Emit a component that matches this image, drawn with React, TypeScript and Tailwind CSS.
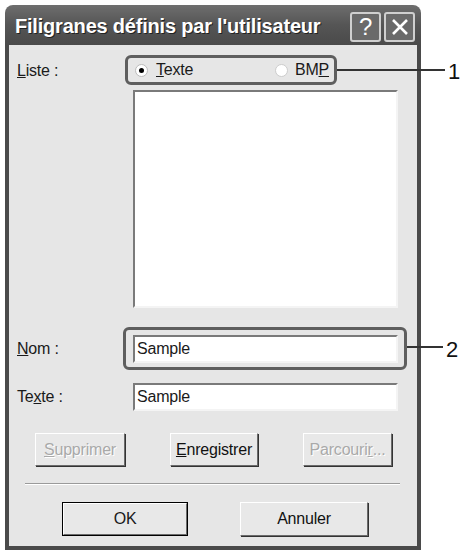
import React from 'react';

const raised =
  'border border-t-white border-l-white border-r-[#6b6b6b] border-b-[#6b6b6b] shadow-[1px_1px_0_#333]';
const sunken =
  'border-2 border-t-[#7a7a7a] border-l-[#7a7a7a] border-r-[#f4f4f4] border-b-[#f4f4f4] bg-white';

const Btn: React.FC<{ w: string; disabled?: boolean; children: React.ReactNode }> = ({ w, disabled, children }) => (
  <div
    className={`${w} h-[33px] flex items-center justify-center bg-[#e8e8e8] ${raised} ${
      disabled ? 'text-[#a9a9a9] [text-shadow:1px_1px_0_#fff]' : 'text-[#111]'
    }`}
  >
    {children}
  </div>
);

const App: React.FC = () => {
  return (
    <div className="w-[465px] h-[554px] bg-white relative font-['Liberation_Sans',Arial,sans-serif] text-[16px] tracking-[-0.2px]">
      <div className="absolute left-[5px] top-[5px] w-[416px] h-[545px] flex flex-col">
        {/* Title bar */}
        <div className="h-[40px] rounded-t-[8px] bg-gradient-to-b from-[#6e6e6e] via-[#555] to-[#4a4a4a] flex items-center pl-[10px] pr-[6px]">
          <span className="text-white font-bold text-[20px] tracking-[-0.2px] [text-shadow:1px_1px_0_#222] flex-1 pt-[2px]">
            Filigranes définis par l'utilisateur
          </span>
          <div className="flex gap-[3px] mt-[3px]">
            <div className="w-[31px] h-[30px] rounded-[3px] border-2 border-[#cfcfcf] bg-[#6a6a6a] flex items-center justify-center text-white text-[24px] leading-none">
              ?
            </div>
            <div className="w-[31px] h-[30px] rounded-[3px] border-2 border-[#cfcfcf] bg-[#6a6a6a] flex items-center justify-center">
              <svg width="18" height="18" viewBox="0 0 18 18">
                <path d="M2 2 L16 16 M16 2 L2 16" stroke="#fff" strokeWidth="2.6" />
              </svg>
            </div>
          </div>
        </div>

        {/* Body */}
        <div className="flex-1 bg-[#e6e6e6] border-x-4 border-b-4 border-[#4a4a4a] flex flex-col text-[#1a1a1a]">
          {/* Liste row */}
          <div className="flex mt-[10px]">
            <div className="w-[116px] pl-[8px] pt-[4px]">
              <span className="underline">L</span>iste :
            </div>
            <div className="relative w-[212px] h-[30px] border-[3px] border-[#5e5e5e] rounded-[6px] flex items-center">
              <div className="flex items-center ml-[7px]">
                <span className="w-[13px] h-[13px] rounded-full bg-white border border-[#bbb] flex items-center justify-center">
                  <span className="w-[5px] h-[5px] rounded-full bg-black" />
                </span>
                <span className="ml-[8px]">
                  <span className="underline">T</span>exte
                </span>
              </div>
              <div className="flex items-center ml-auto mr-[5px]">
                <span className="w-[13px] h-[13px] rounded-full bg-white border border-[#ccc]" />
                <span className="ml-[7px]">
                  BM<span className="underline">P</span>
                </span>
              </div>
              <div className="absolute left-[209px] top-[11px] w-[108px] h-[2px] bg-[#333]" />
              <div className="absolute left-[320px] top-[-3px] text-[22px] text-[#111]">1</div>
            </div>
          </div>

          {/* List box */}
          <div className={`ml-[124px] mt-[5px] w-[265px] h-[218px] ${sunken}`} />

          {/* Nom row */}
          <div className="flex items-center mt-[19px]">
            <div className="w-[114px] pl-[8px]">
              <span className="underline">N</span>om :
            </div>
            <div className="relative w-[284px] h-[43px] border-[3px] border-[#5e5e5e] rounded-[6px] flex items-center pl-[7px]">
              <div className={`w-[265px] h-[28px] ${sunken} flex items-center pl-[2px]`}>Sample</div>
              <div className="absolute left-[281px] top-[16px] w-[36px] h-[2px] bg-[#333]" />
              <div className="absolute left-[320px] top-[3px] text-[22px] text-[#111]">2</div>
            </div>
          </div>

          {/* Texte row */}
          <div className="flex items-center mt-[13px]">
            <div className="w-[124px] pl-[8px]">
              Te<span className="underline">x</span>te :
            </div>
            <div className={`w-[265px] h-[28px] ${sunken} flex items-center pl-[2px]`}>Sample</div>
          </div>

          {/* Action buttons */}
          <div className="flex mt-[22px] pl-[26px] gap-[45px]">
            <Btn w="w-[90px]" disabled>
              <span className="underline">S</span>upprimer
            </Btn>
            <Btn w="w-[88px]">
              <span className="underline">E</span>nregistrer
            </Btn>
            <Btn w="w-[89px]" disabled>
              Parcouri<span className="underline">r</span>...
            </Btn>
          </div>

          {/* Separator */}
          <div className="ml-[16px] w-[375px] mt-[17px] h-[2px] border-t border-t-[#9a9a9a] border-b border-b-white" />

          {/* OK / Annuler */}
          <div className="flex mt-[17px] pl-[53px] gap-[52px]">
            <div className="w-[126px] h-[34px] border border-black">
              <div className="w-full h-full flex items-center justify-center bg-[#e8e8e8] border border-t-white border-l-white border-r-[#6b6b6b] border-b-[#6b6b6b]">
                OK
              </div>
            </div>
            <Btn w="w-[128px] !h-[34px]">Annuler</Btn>
          </div>
        </div>
      </div>
    </div>
  );
};

export default App;
